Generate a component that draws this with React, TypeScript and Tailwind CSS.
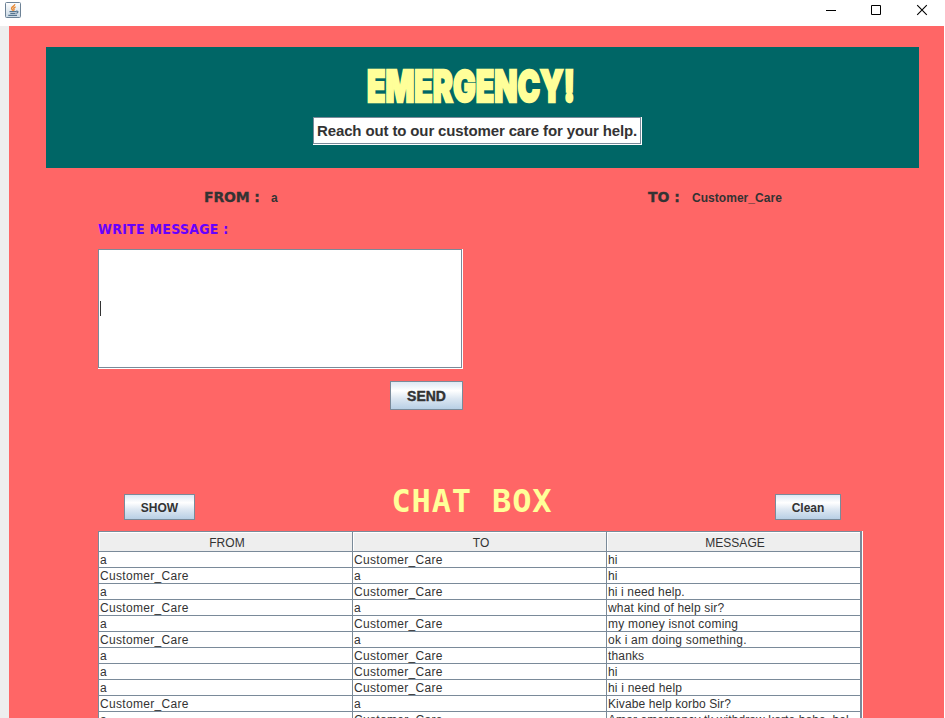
import React from "react";

type Row = { from: string; to: string; message: string; tracking: string };

const CC = "Customer_Care";

const rows: Row[] = [
  { from: "a", to: CC, message: "hi", tracking: "tracking-normal" },
  { from: CC, to: "a", message: "hi", tracking: "tracking-normal" },
  { from: "a", to: CC, message: "hi i need help.", tracking: "tracking-[0.14px]" },
  { from: CC, to: "a", message: "what kind of help sir?", tracking: "tracking-[0.16px]" },
  { from: "a", to: CC, message: "my money isnot coming", tracking: "tracking-[0.2px]" },
  { from: CC, to: "a", message: "ok i am doing something.", tracking: "tracking-[0.22px]" },
  { from: "a", to: CC, message: "thanks", tracking: "tracking-[0.15px]" },
  { from: "a", to: CC, message: "hi", tracking: "tracking-normal" },
  { from: "a", to: CC, message: "hi i need help", tracking: "tracking-[0.2px]" },
  { from: CC, to: "a", message: "Kivabe help korbo Sir?", tracking: "tracking-[0.1px]" },
  { from: "a", to: CC, message: "Amar emergency tk withdraw korte hobe, hel...", tracking: "tracking-[0.08px]" },
];

function JavaIcon() {
  return (
    <svg width="16" height="16" viewBox="0 0 16 16" fill="none">
      <defs>
        <linearGradient id="jbg" x1="0" y1="0" x2="0" y2="1">
          <stop offset="0" stopColor="#ffffff" />
          <stop offset="1" stopColor="#c9d8e4" />
        </linearGradient>
      </defs>
      <rect x="0.5" y="0.5" width="15" height="15" rx="1" fill="url(#jbg)" stroke="#6d8296" />
      <path d="M9.8 2.2C10 4 6.400 4.700 6.600 6.300C6.700 7.200 7.500 7.700 7.600 8.700M10.600 4.800C8.700 5.500 8.500 6.300 9 7.100C9.300 7.700 8.900 8.200 8.500 8.700" stroke="#e8862e" strokeWidth="1.4" />
      <path d="M4.500 9.600H11M5.300 11.500H10.500M11 9.300C13.700 8.600 13.500 10.700 11.300 11.400M3.300 13.400H12" stroke="#56758f" strokeWidth="1.2" />
    </svg>
  );
}

function TitleBar() {
  return (
    <header className="flex h-[26px] shrink-0 items-start justify-between bg-white pl-[5px] pr-[17px] pt-[2px]">
      <JavaIcon />
      <svg width="102" height="16" viewBox="826 2 102 16" fill="none" stroke="#000">
        <path d="M826 10.500H836" />
        <path d="M871.500 5.500H880.500V14.500H871.500Z" />
        <path d="M917.200 5.200L926.800 14.800M926.800 5.200L917.200 14.800" strokeWidth="1.1" />
      </svg>
    </header>
  );
}

function Etched({ className, children }: { className: string; children?: React.ReactNode }) {
  return (
    <div className={`border-b border-r border-white bg-white ${className}`}>
      <div className="flex h-full items-center border border-[#7a8a99]">{children}</div>
    </div>
  );
}

function MetalButton({ className, children }: { className: string; children: React.ReactNode }) {
  return (
    <button
      className={`flex items-center justify-center border border-[#7a8a99] bg-[linear-gradient(to_bottom,#dde8f3_0%,#ffffff_32%,#dbe6f1_62%,#b8cfe5_100%)] pt-px font-bold text-[#333333] ${className}`}
    >
      {children}
    </button>
  );
}

function HeadCell({ children }: { children: React.ReactNode }) {
  return (
    <div className="h-[19px] w-[254px] border-r border-[#7a8a99]">
      <div className="h-full border-l border-t border-white bg-[#eeeeee] pl-[2px] pt-[3px] text-center leading-[14px] tracking-[0.05px]">
        {children}
      </div>
    </div>
  );
}

function Cell({ children, tracking }: { children: React.ReactNode; tracking: string }) {
  return (
    <div className="h-4 w-[254px] overflow-hidden whitespace-nowrap border-b border-r border-[#7a8a99] pl-px leading-[17px]">
      <span className={tracking}>{children}</span>
    </div>
  );
}

const nameTracking = (t: string) => (t === CC ? "tracking-[0.32px]" : "tracking-normal");

export default function App() {
  return (
    <div className="flex h-[718px] w-[945px] flex-col overflow-hidden bg-white font-['Liberation_Sans',Arial,sans-serif] text-xs text-[#333333]">
      <TitleBar />
      <main className="mr-px flex min-h-0 flex-1 flex-col border-l-[9px] border-[#eeeeee] bg-[#ff6666] pt-[21px]">
        <section className="ml-[37px] flex h-[121px] w-[873px] shrink-0 flex-col bg-[#006666] pl-[267px] pt-[14px]">
          <h1 className="ml-[54px] h-[56px] w-[210px] whitespace-nowrap">
            <span className="inline-block origin-left scale-x-[0.686] font-['Inter','Liberation_Sans',sans-serif] text-[44px] font-black leading-[50px] text-[#ffff99] [-webkit-text-stroke:2.4px_#ffff99]">
              EMERGENCY!
            </span>
          </h1>
          <Etched className="h-[28px] w-[329px]">
            <span className="whitespace-nowrap pl-[3px] text-[15px] font-bold tracking-[-0.13px]">
              Reach out to our customer care for your help.
            </span>
          </Etched>
        </section>

        <div className="flex h-[60px] shrink-0 items-center pl-[195px] font-bold">
          <span className="w-[67px] pb-[2px] font-['DejaVu_Sans',sans-serif] text-[14px] tracking-[-0.15px] [-webkit-text-stroke:0.3px_#333333]">FROM :</span>
          <span className="w-[377px]">a</span>
          <span className="w-11 pb-[2px] font-['DejaVu_Sans',sans-serif] text-[14px] [-webkit-text-stroke:0.3px_#333333]">TO :</span>
          <span className="tracking-[0.04px]">Customer_Care</span>
        </div>

        <div className="ml-[89px] flex w-[365px] shrink-0 flex-col items-end">
          <label className="-mt-[9px] mb-[9px] h-[21px] w-full whitespace-nowrap font-['DejaVu_Sans_Condensed','DejaVu_Sans',sans-serif] text-[14px] font-bold leading-[20px] tracking-[0.27px] text-[#6600ff]">
            WRITE MESSAGE :
          </label>
          <Etched className="h-[120px] w-full">
            <span className="ml-px h-[15px] w-px bg-[#333333]" />
          </Etched>
          <MetalButton className="mt-3 h-[29px] w-[73px] text-[14px] [-webkit-text-stroke:0.4px_#333333]">SEND</MetalButton>
        </div>

        <div className="ml-[115px] mt-[72px] flex h-[38px] w-[717px] shrink-0 items-end justify-between">
          <MetalButton className="h-[26px] w-[71px]">SHOW</MetalButton>
          <h2 className="-ml-[7px] h-[38px] w-[180px] whitespace-pre font-['DejaVu_Sans_Mono',monospace] text-[32px] font-bold leading-[38px] tracking-[0.85px] text-[#ffff99]">
            CHAT BOX
          </h2>
          <MetalButton className="h-[26px] w-[66px]">Clean</MetalButton>
        </div>

        <div className="ml-[89px] mt-[11px] w-[765px] shrink-0 border-r border-white">
          <div className="w-[764px] border-l border-r border-t border-[#7a8a99] bg-white">
            <div className="flex border-b border-[#7a8a99]">
              <HeadCell>FROM</HeadCell>
              <HeadCell>TO</HeadCell>
              <HeadCell>MESSAGE</HeadCell>
            </div>
            {rows.map((r, i) => (
              <div key={i} className="flex">
                <Cell tracking={nameTracking(r.from)}>{r.from}</Cell>
                <Cell tracking={nameTracking(r.to)}>{r.to}</Cell>
                <Cell tracking={r.tracking}>{r.message}</Cell>
              </div>
            ))}
          </div>
        </div>
      </main>
    </div>
  );
}
